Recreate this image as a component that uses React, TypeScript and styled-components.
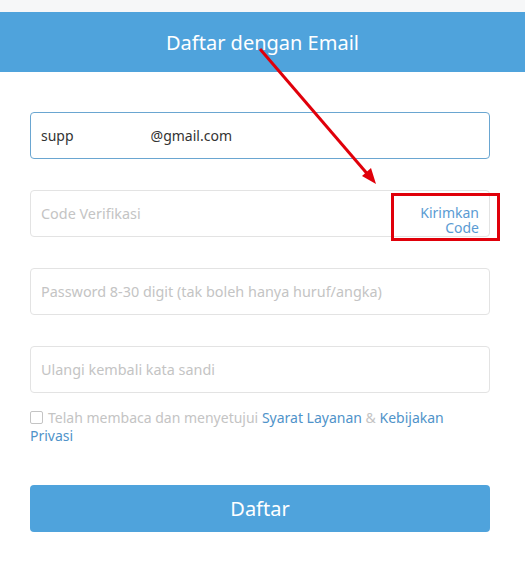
import styled, { createGlobalStyle } from 'styled-components';

const GlobalStyle = createGlobalStyle`
  * {
    box-sizing: border-box;
  }

  body {
    margin: 0;
    background-color: #fff;
    font-family: 'Noto Sans', 'Open Sans', sans-serif;
  }
`;

const Page = styled.div`
  position: relative;
  width: 525px;
  height: 570px;
  padding-top: 12px;
  background-color: #f6f7f8;
`;

const Header = styled.header`
  display: flex;
  justify-content: center;
  align-items: center;

  height: 60px;

  background-color: #4fa3dc;

  h1 {
    margin: 0;
    font-size: 20px;
    font-weight: 400;
    color: #fff;
  }
`;

const Form = styled.form`
  display: flex;
  flex-direction: column;

  height: 498px;
  padding: 40px 35px 0 30px;

  background-color: #fff;
`;

const Fields = styled.div`
  display: flex;
  flex-direction: column;
  gap: 31px;
`;

const Field = styled.div<{ $focused?: boolean }>`
  display: flex;
  align-items: center;

  height: 47px;
  padding: 0 10px;

  border: 1px solid ${({ $focused }) => ($focused ? '#6aa6d1' : '#e3e3e3')};
  border-radius: 4px;

  font-size: 14px;
  color: #333;
`;

const Input = styled.input`
  flex: 1;
  min-width: 0;
  padding: 0;

  border: none;
  outline: none;
  background: transparent;

  font-family: inherit;
  font-size: 14.4px;
  color: #333;

  &::placeholder {
    color: #c4c4c4;
  }
`;

const Hidden = styled.span`
  display: inline-block;
  width: 77px;
`;

const SendCode = styled.button`
  padding: 0;
  margin-top: 12px;

  border: none;
  background: transparent;

  font-family: inherit;
  font-size: 14px;
  line-height: 15px;
  text-align: right;
  color: #5a9bd3;

  cursor: pointer;
`;

const Agree = styled.label`
  display: block;
  margin-top: 16px;

  font-size: 14px;
  line-height: 18px;
  color: #c4c4c4;

  a {
    color: #4f93c9;
    text-decoration: none;
  }
`;

const Box = styled.span`
  display: inline-block;
  width: 13px;
  height: 13px;
  margin-right: 5px;
  vertical-align: -1px;

  border: 1.5px solid #c4c4c4;
  border-radius: 2px;
`;

const Submit = styled.button`
  height: 47px;
  margin-top: 40px;

  border: none;
  border-radius: 4px;
  background-color: #4fa3dc;

  font-family: inherit;
  font-size: 20px;
  color: #fff;

  cursor: pointer;
`;

// annotation drawn over the screenshot
const Mark = styled.div`
  position: absolute;
  left: 391px;
  top: 193px;
  width: 109px;
  height: 48px;

  border: 3px solid #e0000a;
`;

const Arrow = styled.svg`
  position: absolute;
  left: 0;
  top: 0;
  pointer-events: none;
`;

const App = () => {
  return (
    <Page>
      <GlobalStyle />
      <Header>
        <h1>Daftar dengan Email</h1>
      </Header>
      <Form onSubmit={(e) => e.preventDefault()}>
        <Fields>
          <Field $focused>
            <span>supp</span>
            <Hidden />
            <span>@gmail.com</span>
          </Field>
          <Field>
            <Input placeholder="Code Verifikasi" readOnly />
            <SendCode type="button">
              Kirimkan
              <br />
              Code
            </SendCode>
          </Field>
          <Field>
            <Input placeholder="Password 8-30 digit (tak boleh hanya huruf/angka)" readOnly />
          </Field>
          <Field>
            <Input placeholder="Ulangi kembali kata sandi" readOnly />
          </Field>
        </Fields>
        <Agree>
          <Box />
          Telah membaca dan menyetujui <a href="#">Syarat Layanan</a> &amp; <a href="#">Kebijakan</a>{' '}
          <a href="#">Privasi</a>
        </Agree>
        <Submit type="submit">Daftar</Submit>
      </Form>
      <Mark />
      <Arrow width="525" height="570">
        <line x1="260" y1="49" x2="370" y2="177" stroke="#e0000a" strokeWidth="3" />
        <polygon points="376,184 362,176 371,168" fill="#e0000a" />
      </Arrow>
    </Page>
  );
};

export default App;
